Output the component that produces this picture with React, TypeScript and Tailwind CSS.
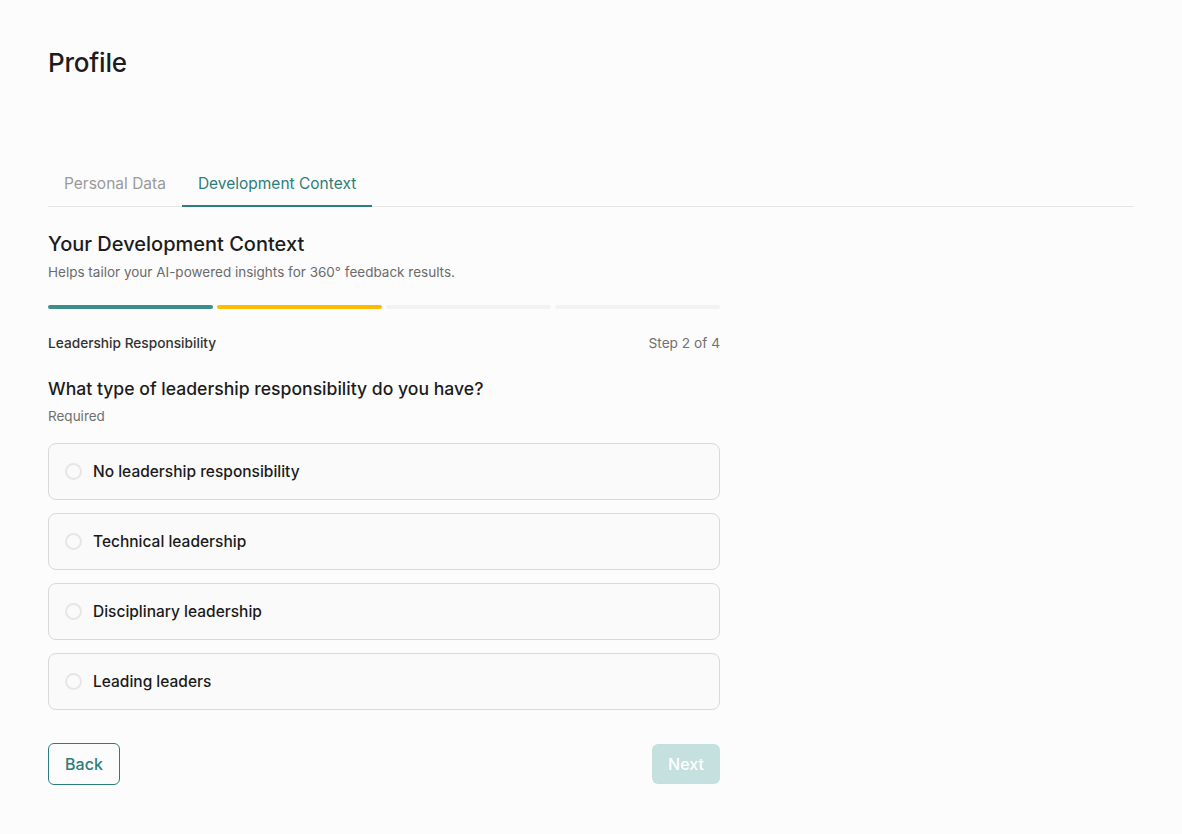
import React from "react";

const options = [
  "No leadership responsibility",
  "Technical leadership",
  "Disciplinary leadership",
  "Leading leaders",
];

export default function App() {
  return (
    <div
      className="min-h-[834px] w-full bg-[#fcfcfc] text-[#1c1c1c]"
      style={{ fontFamily: "Inter, 'Noto Sans', sans-serif" }}
    >
      <div className="px-12 pt-[46px]">
        <h1 className="text-[26px] font-medium leading-[34px] tracking-[-0.2px]">Profile</h1>

        <div className="mt-[92px] flex border-b border-[#e5e5e5]">
          <div className="px-4 pb-[9px] text-[15.5px] leading-[24px] text-[#9a9a9a]">Personal Data</div>
          <div className="-mb-px border-b-2 border-[#2f7d7a] px-4 pb-[9px] text-[15.5px] leading-[24px] text-[#2f7d7a]">
            Development Context
          </div>
        </div>

        <div className="w-[672px]">
          <h2 className="mt-[24px] text-[20px] font-medium leading-[26px]">Your Development Context</h2>
          <p className="mt-[7px] text-[13.5px] leading-[16px] text-[#6b6b6b]">
            Helps tailor your AI-powered insights for 360° feedback results.
          </p>

          <div className="mt-[25px] grid grid-cols-4 gap-[4px]">
            <div className="h-[4px] rounded-full bg-[#3a8f8c]" />
            <div className="h-[4px] rounded-full bg-[#ffbb00]" />
            <div className="h-[4px] rounded-full bg-[#f2f2f2]" />
            <div className="h-[4px] rounded-full bg-[#f2f2f2]" />
          </div>

          <div className="mt-[26px] flex items-center justify-between text-[13.7px] leading-[16px]">
            <span className="font-medium text-[#333]">Leadership Responsibility</span>
            <span className="text-[#707070]">Step 2 of 4</span>
          </div>

          <h3 className="mt-[26px] text-[17.6px] font-medium leading-[24px]">
            What type of leadership responsibility do you have?
          </h3>
          <p className="mt-[7px] text-[13.5px] leading-[16px] text-[#707070]">Required</p>

          <div className="mt-[19px] flex flex-col gap-[13px]">
            {options.map((o) => (
              <div
                key={o}
                className="flex h-[57px] items-center gap-[11px] rounded-lg border border-[#d9d9d9] bg-[#fafafa] px-[16px]"
              >
                <span className="h-[17px] w-[17px] rounded-full border-2 border-[#e6e6e6] bg-[#fafafa]" />
                <span className="text-[15.5px] font-medium leading-[22px] text-[#1a1a1a]">{o}</span>
              </div>
            ))}
          </div>

          <div className="mt-[33px] flex items-center justify-between">
            <button className="h-[42px] w-[72px] rounded-md border border-[#2f7d7a] text-[16px] font-medium text-[#2f7d7a]">
              Back
            </button>
            <button className="h-[40px] w-[68px] rounded-md bg-[#c4e0df] text-[16px] font-medium text-white">
              Next
            </button>
          </div>
        </div>
      </div>
    </div>
  );
}
